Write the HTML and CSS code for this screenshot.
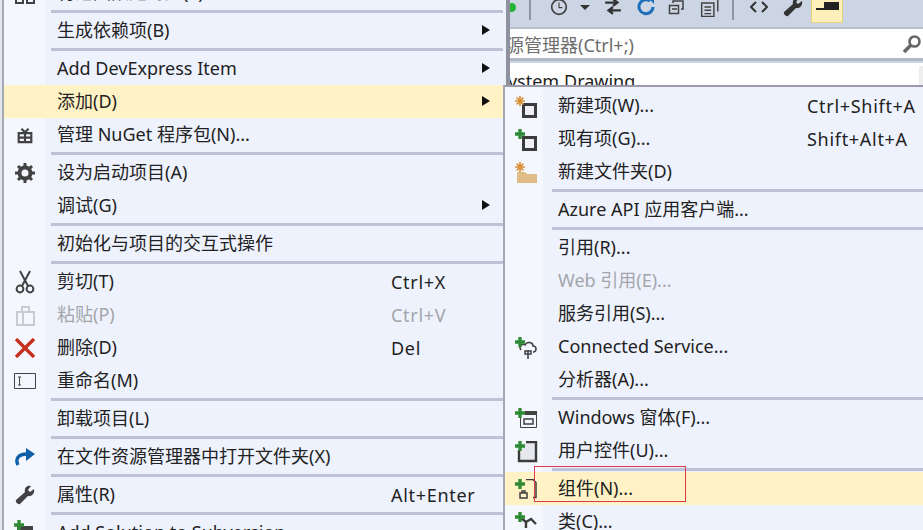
FILE: index.html
```html
<!DOCTYPE html>
<html lang="zh-CN">

<head>
    <meta charset="UTF-8">
    <title>添加组件</title>
    <link rel="stylesheet" href="styles.css">
</head>

<body>
    <svg class="sprites" width="0" height="0">
        <symbol id="box" viewBox="0 0 30 24"><path d="M11.500 8.500h12v12h-12z" fill="#eef0f4" stroke="#3c3c3c" stroke-width="3"/></symbol>
        <symbol id="plus" viewBox="0 0 12 12"><path d="M4 0h4v4h4v4H8v4H4V8H0V4h4z" fill="#2f8a35"/></symbol>
        <symbol id="star" viewBox="0 0 12 12"><path d="M6 0v12M0 6h12M2 2l8 8M10 2l-8 8" stroke="#d8923a" stroke-width="2"/></symbol>
    </svg>

    <div class="screen">
        <div class="strip"></div>

        <!-- Project context menu -->
        <div class="menu main-menu">
            <div class="item">
                <span class="icon"><svg width="20" height="33" viewBox="0 0 20 33"><path d="M1 20h7v7H1zM12 20h7v7h-7z" fill="none" stroke="#424242" stroke-width="2"/></svg></span>
                <span class="label">将范围限定为此(S)</span>
            </div>
            <div class="sep"></div>
            <div class="item has-sub"><span class="icon"></span><span class="label">生成依赖项(B)</span></div>
            <div class="sep"></div>
            <div class="item has-sub"><span class="icon"></span><span class="label">Add DevExpress Item</span></div>
            <div class="item has-sub active"><span class="icon"></span><span class="label">添加(D)</span></div>
            <div class="item">
                <span class="icon"><svg width="18" height="20" viewBox="0 0 20 20"><path d="M3 8h14v10H3zM10 8v10M3 13h14M6 3l4 4 4-4" fill="none" stroke="#424242" stroke-width="2.400"/></svg></span>
                <span class="label">管理 NuGet 程序包(N)...</span>
            </div>
            <div class="sep"></div>
            <div class="item">
                <span class="icon"><svg width="22" height="22" viewBox="0 0 22 22"><circle cx="11" cy="11" r="5.500" fill="none" stroke="#424242" stroke-width="4"/><path d="M11 1v4M11 17v4M1 11h4M17 11h4M4 4l3 3M15 15l3 3M18 4l-3 3M7 15l-3 3" stroke="#424242" stroke-width="3"/></svg></span>
                <span class="label">设为启动项目(A)</span>
            </div>
            <div class="item has-sub"><span class="icon"></span><span class="label">调试(G)</span></div>
            <div class="sep"></div>
            <div class="item"><span class="icon"></span><span class="label">初始化与项目的交互式操作</span></div>
            <div class="sep"></div>
            <div class="item">
                <span class="icon"><svg width="20" height="24" viewBox="0 0 20 24"><path d="M5 1l8 15M15 1L7 16" stroke="#424242" stroke-width="2" fill="none"/><circle cx="5" cy="19" r="3.400" fill="none" stroke="#424242" stroke-width="2"/><circle cx="15" cy="19" r="3.400" fill="none" stroke="#424242" stroke-width="2"/></svg></span>
                <span class="label">剪切(T)</span><span class="keys">Ctrl+X</span>
            </div>
            <div class="item disabled">
                <span class="icon"><svg width="20" height="22" viewBox="0 0 20 22"><path d="M2 8h17v13H2zM8 8v13M7 8V3h7v5" fill="none" stroke="#c8cbd2" stroke-width="2"/></svg></span>
                <span class="label">粘贴(P)</span><span class="keys">Ctrl+V</span>
            </div>
            <div class="item">
                <span class="icon"><svg width="22" height="20" viewBox="0 0 22 20"><path d="M2 1l18 18M20 1L2 19" stroke="#c5311f" stroke-width="3.400"/></svg></span>
                <span class="label">删除(D)</span><span class="keys">Del</span>
            </div>
            <div class="item">
                <span class="icon"><svg width="22" height="16" viewBox="0 0 22 16"><path d="M.5.5h21v15H.5z" fill="#f4f6fb" stroke="#444"/><path d="M4 4h3M4 12h3M5.500 4v8" stroke="#444"/></svg></span>
                <span class="label">重命名(M)</span>
            </div>
            <div class="sep"></div>
            <div class="item"><span class="icon"></span><span class="label">卸载项目(L)</span></div>
            <div class="sep"></div>
            <div class="item">
                <span class="icon"><svg width="22" height="20" viewBox="0 0 22 20"><path d="M4 18c-3-6 0-11 9-11" fill="none" stroke="#0e5fa8" stroke-width="3.400"/><path d="M12 1l9 6-9 7z" fill="#0e5fa8"/></svg></span>
                <span class="label">在文件资源管理器中打开文件夹(X)</span>
            </div>
            <div class="sep"></div>
            <div class="item">
                <span class="icon"><svg width="20" height="20" viewBox="0 0 20 20"><path d="M19 4l-4 3-2-2 3-4c-4-1-7 2-6 6L1 15c-1 2 2 5 4 4l8-8c4 1 7-3 6-7z" fill="#424242"/></svg></span>
                <span class="label">属性(R)</span><span class="keys">Alt+Enter</span>
            </div>
            <div class="sep"></div>
            <div class="item">
                <span class="icon"><svg class="plus" width="10" height="10"><use href="#plus"/></svg><svg width="16" height="14" viewBox="0 0 16 14"><path d="M0 0h16v14H0z" fill="#424242"/></svg></span>
                <span class="label">Add Solution to Subversion</span>
            </div>
        </div>

        <div class="side">
            <!-- VS toolbar behind the menu -->
            <div class="toolbar">
                <span class="led"></span>
                <span class="tool-sep"></span>
                <svg class="clock" width="18" height="18" viewBox="0 0 16 16"><circle cx="8" cy="8" r="6.500" fill="none" stroke="#424242" stroke-width="1.500"/><path d="M8 4v4.500h3" fill="none" stroke="#424242"/></svg>
                <span class="drop"></span>
                <svg width="22" height="18" viewBox="0 0 18 16"><path d="M2 4h11M9 1l4 3-4 3M16 11H5M9 8l-4 3 4 3" fill="none" stroke="#333" stroke-width="2"/></svg>
                <svg width="20" height="18" viewBox="0 0 20 18"><path d="M14 3A7 7 0 1 0 17 9" fill="none" stroke="#1c6fb8" stroke-width="3"/><path d="M12 0h6v6z" fill="#1c6fb8"/></svg>
                <svg width="17" height="15" viewBox="0 0 17 15"><path d="M1.500 5.500h9v8h-9zM5 3V1h10v8h-2M4 9h5" fill="none" stroke="#424242" stroke-width="1.500"/></svg>
                <svg class="doc" width="20" height="19" viewBox="0 0 18 17"><path d="M4 1h12v11M1.500 4.500h11v12h-11zM4 8h6M4 11h6M4 14h6" fill="none" stroke="#424242" stroke-width="1.300"/></svg>
                <span class="tool-sep"></span>
                <svg class="code" width="18" height="12" viewBox="0 0 18 12"><path d="M6 1L1 6l5 5M12 1l5 5-5 5" fill="none" stroke="#333" stroke-width="2"/></svg>
                <svg class="wrench" width="22" height="20" viewBox="0 0 20 20"><path d="M19 4l-4 3-2-2 3-4c-4-1-7 2-6 6L1 15c-1 2 2 5 4 4l8-8c4 1 7-3 6-7z" fill="#333"/></svg>
                <span class="tool-active"><svg width="23" height="10" viewBox="0 0 23 10"><path d="M8 0h15v6H8zM0 6h23v2H0z" fill="#222"/></svg></span>
            </div>
            <div class="search">
                <span class="search-text">源管理器(Ctrl+;)</span>
                <svg width="20" height="20" viewBox="0 0 20 20"><circle cx="12.500" cy="7.500" r="5" fill="none" stroke="#666" stroke-width="2.600"/><path d="M9 11l-7 7" stroke="#666" stroke-width="3.600"/></svg>
            </div>
            <div class="tree"><span class="tree-text">System.Drawing</span><span class="tree-scroll"></span></div>

            <!-- Add submenu -->
            <div class="menu sub-menu">
                <div class="item">
                    <span class="icon"><svg class="ic" width="30" height="24"><use href="#box"/></svg><svg class="mark" width="10" height="10"><use href="#star"/></svg></span>
                    <span class="label">新建项(W)...</span><span class="keys">Ctrl+Shift+A</span>
                </div>
                <div class="item">
                    <span class="icon"><svg class="ic" width="30" height="24"><use href="#box"/></svg><svg class="mark" width="10" height="10"><use href="#plus"/></svg></span>
                    <span class="label">现有项(G)...</span><span class="keys">Shift+Alt+A</span>
                </div>
                <div class="item">
                    <span class="icon"><svg class="ic" width="30" height="24" viewBox="0 0 30 24"><path d="M5 10h8l2 2h10v9H5z" fill="#e0bd86"/></svg><svg class="mark" width="10" height="10"><use href="#star"/></svg></span>
                    <span class="label">新建文件夹(D)</span>
                </div>
                <div class="sep"></div>
                <div class="item"><span class="icon"></span><span class="label">Azure API 应用客户端...</span></div>
                <div class="sep"></div>
                <div class="item"><span class="icon"></span><span class="label">引用(R)...</span></div>
                <div class="item disabled"><span class="icon"></span><span class="label">Web 引用(E)...</span></div>
                <div class="item"><span class="icon"></span><span class="label">服务引用(S)...</span></div>
                <div class="item">
                    <span class="icon"><svg class="ic" width="30" height="24" viewBox="0 0 30 24"><path d="M9 13c-3-4 2-7 4-5 2-4 8-3 8 1 4 0 4 6 0 6M16 13v9M13 14h6v3h-6z" fill="none" stroke="#424242" stroke-width="1.500"/></svg><svg class="mark" width="10" height="10"><use href="#plus"/></svg></span>
                    <span class="label">Connected Service...</span>
                </div>
                <div class="item"><span class="icon"></span><span class="label">分析器(A)...</span></div>
                <div class="sep"></div>
                <div class="item">
                    <span class="icon"><svg class="ic" width="30" height="24" viewBox="0 0 30 24"><path d="M8.500 5.500h16v14h-16z" fill="none" stroke="#424242"/><path d="M13 3h12v4H13z" fill="#424242"/><path d="M12 11h9v5h-9z" fill="none" stroke="#424242" stroke-width="1.500"/></svg><svg class="mark" width="10" height="10"><use href="#plus"/></svg></span>
                    <span class="label">Windows 窗体(F)...</span>
                </div>
                <div class="item">
                    <span class="icon"><svg class="ic" width="30" height="24" viewBox="0 0 30 24"><path d="M7 9v11h17V1H14" fill="#e6e8ee" stroke="#3c3c3c" stroke-width="2.400"/></svg><svg class="mark" width="10" height="10"><use href="#plus"/></svg></span>
                    <span class="label">用户控件(U)...</span>
                </div>
                <div class="sep"></div>
                <div class="item active">
                    <span class="icon"><svg class="ic" width="30" height="24" viewBox="0 0 30 24"><path d="M14 .5h7l3 3v15h-3M8 14h7v5H8zM10 14v-2h3v2" fill="none" stroke="#3c3c3c" stroke-width="1.500"/></svg><svg class="mark" width="10" height="10"><use href="#plus"/></svg></span>
                    <span class="label">组件(N)...</span>
                </div>
                <div class="item">
                    <span class="icon"><svg class="ic" width="30" height="24" viewBox="0 0 30 24"><path d="M9 6l5 4 5-3 5 5M14 10v6" fill="none" stroke="#3c3c3c" stroke-width="2.400"/></svg><svg class="mark" width="10" height="10"><use href="#plus"/></svg></span>
                    <span class="label">类(C)...</span>
                </div>
            </div>
        </div>

        <!-- red annotation box -->
        <div class="annotation"></div>
    </div>
</body>

</html>
```

FILE: styles.css
```css
/* Reset & Fonts */
* {
    margin: 0;
    padding: 0;
    box-sizing: border-box;
}

html,
body {
    height: 100%;
    overflow: hidden;
}

body {
    background-color: #ccd5e4;
    color: #222;
    font-family: "Noto Sans", "Noto Sans CJK SC", sans-serif;
    font-size: 18px;
}

.sprites {
    position: absolute;
}

.screen {
    position: relative;
    display: flex;
    width: 923px;
    height: 530px;
    overflow: hidden;
}

.strip {
    width: 2px;
    flex-shrink: 0;
    background-color: #e4e6ec;
}

/* Menus */
.menu {
    position: relative;
    background-color: #eef2fd;
}

.main-menu {
    z-index: 1;
    width: 508px;
    height: 570px;
    margin-top: -24px;
    padding-right: 3px;
    flex-shrink: 0;
    background-image: linear-gradient(to right, #f4f7fe 41px, transparent 41px);
    border-left: 2px solid #a4a9b8;
    border-right: 4px solid #8f929e;
}

.item {
    position: relative;
    display: flex;
    align-items: center;
    height: 33px;
}

.item.active {
    background-color: #fff2c4;
}

.item.disabled {
    color: #a3a5aa;
}

.icon {
    position: relative;
    width: 42px;
    height: 33px;
    display: flex;
    align-items: center;
    justify-content: center;
    flex-shrink: 0;
}

.label {
    margin-left: 11px;
    white-space: nowrap;
    line-height: 33px;
}

.keys {
    position: absolute;
    left: 387px;
    white-space: nowrap;
    letter-spacing: 0.7px;
}

.has-sub::after {
    content: "";
    position: absolute;
    right: 13px;
    top: 11px;
    border-left: 8px solid #111;
    border-top: 5px solid transparent;
    border-bottom: 5px solid transparent;
}

.sep {
    height: 5px;
    margin-left: 47px;
    padding: 1px 0;
    background-color: #bcc3d6;
    background-clip: content-box;
}

/* Right side */
.side {
    flex: 1;
    min-width: 0;
    display: flex;
    flex-direction: column;
}

.toolbar {
    display: flex;
    flex-shrink: 0;
    align-items: center;
    gap: 12px;
    height: 27px;
    padding-bottom: 13px;
    overflow: hidden;
}

.led {
    width: 9px;
    height: 9px;
    margin: 0 1px 0 -3px;
    border-radius: 50%;
    background-color: #22b533;
}

.tool-sep {
    align-self: flex-start;
    width: 2px;
    height: 20px;
    background-color: #8d96a8;
}

.clock {
    margin-left: 7px;
}

.doc {
    margin-left: 3px;
}

.code {
    margin-left: 4px;
}

.wrench {
    margin-left: 2px;
}

.drop {
    border-top: 5px solid #333;
    border-left: 5px solid transparent;
    border-right: 5px solid transparent;
}

.tool-active {
    align-self: flex-start;
    display: flex;
    justify-content: center;
    width: 32px;
    height: 23px;
    margin-left: -5px;
    padding-top: 2px;
    background-color: #fdf0b8;
    border: 1px solid #e8cf7e;
    border-top: none;
}

.search {
    display: flex;
    flex-shrink: 0;
    align-items: center;
    justify-content: space-between;
    height: 34px;
    padding-right: 1px;
    background-color: #fff;
    border-top: 2px solid #b8bfcc;
    border-bottom: 3px solid #b0b8c8;
}

.search-text {
    color: #6d6d6d;
    margin-left: -4px;
    white-space: nowrap;
}

.tree {
    display: flex;
    flex-shrink: 0;
    justify-content: space-between;
    height: 22px;
    margin-top: 2px;
    background-color: #fff;
    overflow: hidden;
}

.tree-text {
    margin-left: -12px;
    line-height: 36px;
    white-space: nowrap;
}

.tree-scroll {
    width: 4px;
    margin-top: 3px;
    background-color: #eeeeee;
}

.sub-menu {
    z-index: 2;
    flex-shrink: 0;
    height: 460px;
    margin-left: -7px;
    padding-top: 2px;
    border-top: 2px solid #9a9aaa;
    border-left: 2px solid #a4a9b8;
    background-image: linear-gradient(to right, #f4f7fe 38px, transparent 38px);
}

.sub-menu .icon {
    width: 40px;
}

.sub-menu .label {
    margin-left: 13px;
}

.sub-menu .keys {
    left: 302px;
}

.sub-menu .ic {
    position: absolute;
    left: 7px;
    top: 7px;
}

.sub-menu .mark {
    position: absolute;
    left: 10px;
    top: 7px;
}

.plus {
    position: absolute;
    left: 10px;
    top: 4px;
}

/* Annotation */
.annotation {
    position: absolute;
    z-index: 3;
    left: 534px;
    top: 466px;
    width: 152px;
    height: 36px;
    border: 1px solid #d93a50;
}
```
